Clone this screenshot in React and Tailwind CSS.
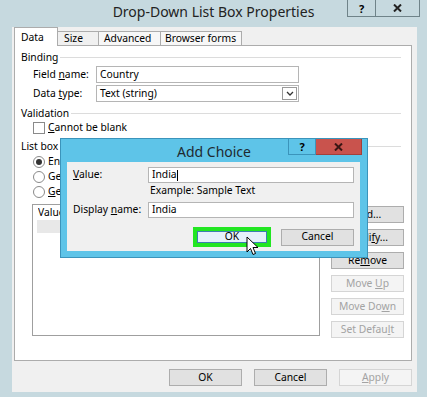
const btn = "h-[17px] w-[73px] flex items-center justify-center border";
const on = "bg-[#e1e1e1] border-[#adadad] text-black";
const off = "bg-[#f4f4f4] border-[#d5d5d5] text-[#a3a3a3]";

function Section({ label, clip }) {
  return (
    <div className="flex items-center h-[14px] pl-[6px] pr-[10px]">
      {clip ? (
        <div className="w-[39px] overflow-hidden whitespace-nowrap leading-none">{label}</div>
      ) : (
        <span className="leading-none">{label}</span>
      )}
      <div className="flex-1 h-px bg-[#dcdcdc] ml-[2px]" />
    </div>
  );
}

function XIcon({ color = "#222", size = 9 }) {
  return (
    <svg width={size} height={size - 1} viewBox="0 0 9 8">
      <path d="M1 0.5 L8 7.5 M8 0.5 L1 7.5" stroke={color} strokeWidth="2" />
    </svg>
  );
}

function Radio({ checked }) {
  return (
    <div className="w-[12px] h-[12px] shrink-0 rounded-full border border-[#8a8a8a] bg-white flex items-center justify-center">
      {checked && <div className="w-[6px] h-[6px] rounded-full bg-[#333]" />}
    </div>
  );
}

export default function App() {
  return (
    <div className="relative w-[427px] h-[397px] overflow-hidden bg-[#c6d9df] font-['Noto_Sans',sans-serif] text-[10.3px] text-black flex flex-col">
      {/* title bar */}
      <div className="relative h-[27px] flex items-center justify-center shrink-0 pb-[4px]">
        <span className="text-[14px] text-[#222] leading-none">Drop-Down List Box Properties</span>
        <div className="absolute left-[347px] top-0 flex h-[17px]">
          <div className="w-[29px] border border-t-0 border-[#6f8389] flex items-center justify-center text-[11px] font-bold leading-none">?</div>
          <div className="w-[44px] border border-t-0 border-l-0 border-[#6f8389] flex items-center justify-center">
            <XIcon />
          </div>
        </div>
      </div>

      {/* client */}
      <div className="ml-[12px] w-[405px] h-[365px] bg-[#f0f0f0] flex flex-col">
        {/* tabs */}
        <div className="flex items-end h-[18px] mt-[1px] pl-[2px]">
          <div className="relative z-10 h-[19px] w-[44px] bg-white border border-b-0 border-[#acacac] flex items-start pt-[2px] pl-[6px]">Data</div>
          <div className="h-[15px] w-[41px] border border-l-0 border-b-0 border-[#acacac] bg-[#f0f0f0] flex items-center pl-[6px]">Size</div>
          <div className="h-[15px] w-[62px] border border-l-0 border-b-0 border-[#acacac] bg-[#f7f7f7] flex items-center pl-[5px]">Advanced</div>
          <div className="h-[15px] w-[81px] border border-l-0 border-b-0 border-[#acacac] bg-[#f7f7f7] flex items-center pl-[4px]">Browser forms</div>
        </div>

        {/* panel */}
        <div className="ml-[2px] w-[398px] h-[316px] -mt-[1px] bg-white border border-[#acacac] flex flex-col">
          <div className="mt-[4px]"><Section label="Binding" /></div>
          <div className="flex items-center h-[17px] mt-[2px] pl-[18px]">
            <span className="w-[63px]">Field <u>n</u>ame:</span>
            <div className="w-[203px] h-[17px] border border-[#b5b5b5] flex items-center pl-[3px]">Country</div>
          </div>
          <div className="flex items-center h-[17px] mt-[2px] pl-[18px]">
            <span className="w-[63px]">Data <u>t</u>ype:</span>
            <div className="w-[203px] h-[17px] border border-[#b5b5b5] flex items-center pl-[3px]">
              <span className="flex-1">Text (string)</span>
              <div className="w-[15px] h-[13px] mr-[1px] border border-[#9a9a9a] flex items-center justify-center">
                <svg width="8" height="5" viewBox="0 0 8 5"><path d="M1 1 L4 4 L7 1" stroke="#333" strokeWidth="1.3" fill="none" /></svg>
              </div>
            </div>
          </div>
          <div className="mt-[4px]"><Section label="Validation" /></div>
          <div className="flex items-center h-[12px] mt-[2px] pl-[18px]">
            <div className="w-[12px] h-[12px] border border-[#8a8a8a] bg-white" />
            <span className="ml-[3px]"><u>C</u>annot be blank</span>
          </div>
          <div className="mt-[5px]"><Section label="List box entries" clip /></div>
          <div className="mt-[1px] flex flex-col pl-[18px]">
            <div className="flex items-center h-[15px]"><Radio checked /><div className="ml-[3px] w-[13px] overflow-hidden whitespace-nowrap">Enter list box entries manually</div></div>
            <div className="flex items-center h-[15px]"><Radio /><div className="ml-[3px] w-[13px] overflow-hidden whitespace-nowrap">Get choices from fields in this form</div></div>
            <div className="flex items-center h-[15px]"><Radio /><div className="ml-[3px] w-[13px] overflow-hidden whitespace-nowrap"><u>G</u>et choices from an external data source</div></div>
          </div>
          <div className="flex mt-[5px] pl-[17px]">
            <div className="w-[288px] h-[132px] border border-[#9f9f9f] bg-white flex flex-col">
              <div className="flex h-[13px] items-center pl-[5px] mt-[1px]">
                <div className="w-[22px] overflow-hidden whitespace-nowrap">Value</div>
              </div>
              <div className="ml-[4px] mr-[4px] mt-[1px] h-[13px] bg-[#e8e8e8]" />
            </div>
            <div className="ml-[11px] mt-[2px] flex flex-col gap-[6px]">
              <div className={`${btn} ${on}`}><span><u>A</u>dd...</span></div>
              <div className={`${btn} ${on}`}><span>Modi<u>f</u>y...</span></div>
              <div className={`${btn} ${on}`}><span>Re<u>m</u>ove</span></div>
              <div className={`${btn} ${off}`}><span>Move <u>U</u>p</span></div>
              <div className={`${btn} ${off}`}><span>Move Do<u>w</u>n</span></div>
              <div className={`${btn} ${off}`}><span>Set Defau<u>l</u>t</span></div>
            </div>
          </div>
        </div>

        {/* bottom buttons */}
        <div className="flex justify-end gap-[12px] mt-[8px] pr-[5px]">
          <div className={`${btn} h-[16px] w-[72px] ${on}`}>OK</div>
          <div className={`${btn} h-[16px] w-[72px] ${on}`}>Cancel</div>
          <div className={`${btn} h-[16px] w-[72px] ${off}`}><span><u>A</u>pply</span></div>
        </div>
      </div>

      {/* Add Choice overlay dialog */}
      <div className="absolute left-[60px] top-[138px] w-[308px] h-[120px] bg-[#5ec4e8] border border-[#3b94bb] flex flex-col">
        <div className="relative h-[23px] flex items-center justify-center shrink-0">
          <span className="text-[14px] text-[#1e2a30] leading-none pt-[2px]">Add Choice</span>
          <div className="absolute left-[227px] top-0 flex h-[16px]">
            <div className="w-[28px] border border-t-0 border-[#3b94bb] flex items-center justify-center text-[11px] font-bold leading-none">?</div>
            <div className="w-[46px] bg-[#c9534d] border border-t-0 border-l-0 border-[#a33f3a] flex items-center justify-center">
              <XIcon color="#3a1614" />
            </div>
          </div>
        </div>
        <div className="ml-[6px] w-[293px] h-[89px] bg-[#f0f0f0] flex flex-col">
          <div className="flex items-center h-[16px] mt-[5px] pl-[6px]">
            <span className="w-[75px]"><u>V</u>alue:</span>
            <div className="w-[206px] h-[16px] border border-[#b5b5b5] bg-white flex items-center pl-[3px]">India<span className="w-px h-[11px] bg-black" /></div>
          </div>
          <div className="h-[14px] flex items-center pl-[83px] mt-[1px]">Example: Sample Text</div>
          <div className="flex items-center h-[16px] mt-[4px] pl-[6px]">
            <span className="w-[75px]">Display <u>n</u>ame:</span>
            <div className="w-[206px] h-[16px] border border-[#b5b5b5] bg-white flex items-center pl-[3px]">India</div>
          </div>
          <div className="flex items-center mt-[9px] pl-[126px]">
            <div className="relative w-[78px] h-[20px] border-[4px] border-[#22e622] flex">
              <div className="flex-1 bg-[#e5f1fb] border border-[#3c7fb1] flex items-center justify-center">OK</div>
              <svg className="absolute left-[49px] top-[5px]" width="13" height="20" viewBox="0 0 13 20">
                <path d="M1 1 L1 16 L4.5 12.5 L7 18.5 L9.5 17.5 L7 11.5 L12 11.5 Z" fill="white" stroke="black" strokeWidth="1" strokeLinejoin="round" />
              </svg>
            </div>
            <div className={`${btn} ml-[10px] h-[16px] w-[73px] ${on}`}>Cancel</div>
          </div>
        </div>
      </div>
    </div>
  );
}
